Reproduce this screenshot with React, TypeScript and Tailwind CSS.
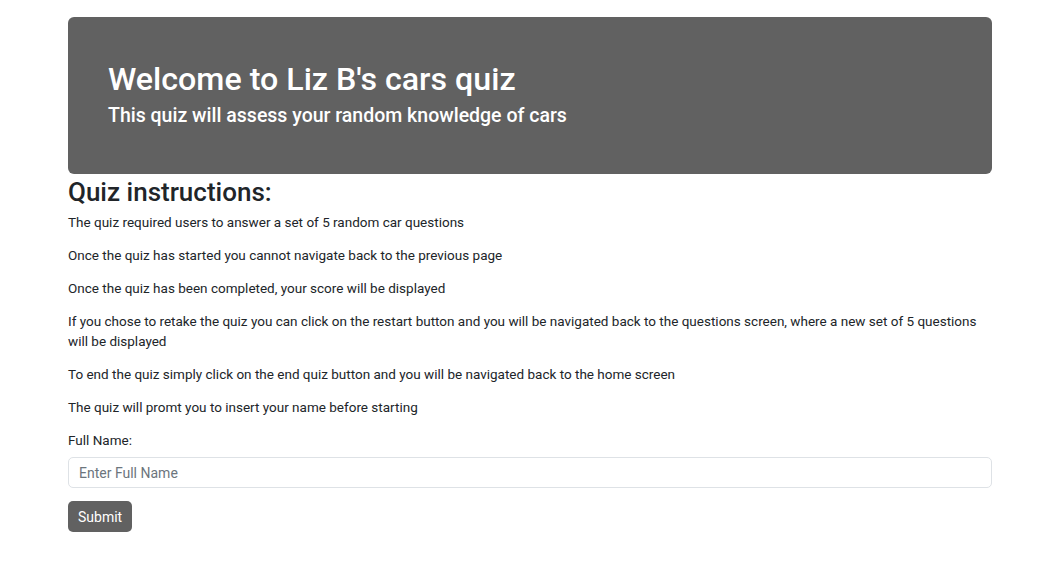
export default function App() {
  const rules = [
    "The quiz required users to answer a set of 5 random car questions",
    "Once the quiz has started you cannot navigate back to the previous page",
    "Once the quiz has been completed, your score will be displayed",
    "If you chose to retake the quiz you can click on the restart button and you will be navigated back to the questions screen, where a new set of 5 questions will be displayed",
    "To end the quiz simply click on the end quiz button and you will be navigated back to the home screen",
    "The quiz will promt you to insert your name before starting",
  ];

  return (
    <div className="min-h-screen bg-white font-['Roboto',sans-serif] text-[#212529]">
      <div className="mx-auto w-[924px] pt-[17px]">
        {/* Jumbotron */}
        <div className="flex h-[157px] flex-col justify-center rounded-md bg-[#616161] px-10 pb-[4px] text-white">
          <h1 className="text-[32.2px] font-medium leading-[40px]">Welcome to Liz B&apos;s cars quiz</h1>
          <h4 className="mt-[5px] text-[19.5px] font-medium leading-6">
            This quiz will assess your random knowledge of cars
          </h4>
        </div>

        <h2 className="mt-[2px] text-[26px] font-medium leading-[32px]">Quiz instructions:</h2>

        <div className="mt-[4px] text-[13.5px] leading-5">
          {rules.map((r, i) => (
            <p key={i} className="mb-[13px]">
              {r}
            </p>
          ))}

          <label className="block">Full Name:</label>
          <input
            type="text"
            placeholder="Enter Full Name"
            className="mt-[7px] block h-[31px] w-full rounded-[5px] border border-[#dee2e6] px-[10px] text-[14px] outline-none placeholder:text-[#6c757d]"
          />
          <button className="mt-[13px] h-[31px] rounded-[5px] bg-[#616161] px-[10px] text-[14px] text-white">
            Submit
          </button>
        </div>
      </div>
    </div>
  );
}
